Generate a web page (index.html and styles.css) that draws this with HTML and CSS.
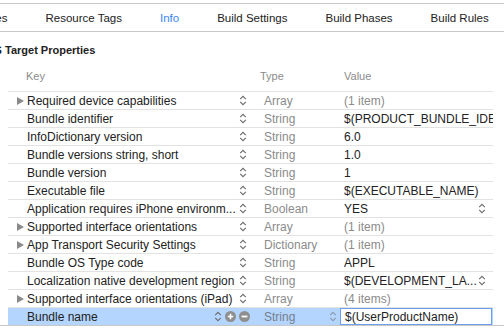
FILE: index.html
```html
<!DOCTYPE html>
<html lang="en">
<head>
  <meta charset="UTF-8">
  <title>Info</title>
  <link rel="stylesheet" href="styles.css">
</head>
<body>
  <svg class="defs" width="0" height="0">
    <symbol id="chev" viewBox="0 0 8 11">
      <path d="M1.2 4.2 L4 1.4 L6.8 4.2 M1.2 6.8 L4 9.6 L6.8 6.8" fill="none" stroke="#6b6b6b" stroke-width="1.1"/>
    </symbol>
    <symbol id="plus" viewBox="0 0 11 11">
      <circle cx="5.5" cy="5.5" r="5.5" fill="#8f8f8f"/>
      <path d="M2.8 5.5 H8.2 M5.5 2.8 V8.2" stroke="#fff" stroke-width="1.6"/>
    </symbol>
    <symbol id="minus" viewBox="0 0 11 11">
      <circle cx="5.5" cy="5.5" r="5.5" fill="#8f8f8f"/>
      <path d="M2.6 5.5 H8.4" stroke="#fff" stroke-width="1.8"/>
    </symbol>
  </svg>

  <div class="tabs">
    <span class="tab first">Capabilities</span>
    <span class="tab">Resource Tags</span>
    <span class="tab active">Info</span>
    <span class="tab">Build Settings</span>
    <span class="tab">Build Phases</span>
    <span class="tab">Build Rules</span>
  </div>

  <div class="section-title">iOS Target Properties</div>

  <div class="plist">
    <div class="head">
      <span class="h-key">Key</span>
      <span class="h-type">Type</span>
      <span class="h-val">Value</span>
    </div>

    <div class="row">
      <span class="tri"><i class="arrow"></i></span>
      <span class="key">Required device capabilities</span>
      <span class="ctl"><svg class="chev"><use href="#chev"/></svg></span>
      <span class="type">Array</span>
      <span class="val muted">(1 item)</span>
    </div>
    <div class="row">
      <span class="tri"></span>
      <span class="key">Bundle identifier</span>
      <span class="ctl"><svg class="chev"><use href="#chev"/></svg></span>
      <span class="type">String</span>
      <span class="val">$(PRODUCT_BUNDLE_IDENTIFIER)</span>
    </div>
    <div class="row">
      <span class="tri"></span>
      <span class="key">InfoDictionary version</span>
      <span class="ctl"><svg class="chev"><use href="#chev"/></svg></span>
      <span class="type">String</span>
      <span class="val">6.0</span>
    </div>
    <div class="row">
      <span class="tri"></span>
      <span class="key">Bundle versions string, short</span>
      <span class="ctl"><svg class="chev"><use href="#chev"/></svg></span>
      <span class="type">String</span>
      <span class="val">1.0</span>
    </div>
    <div class="row">
      <span class="tri"></span>
      <span class="key">Bundle version</span>
      <span class="ctl"><svg class="chev"><use href="#chev"/></svg></span>
      <span class="type">String</span>
      <span class="val">1</span>
    </div>
    <div class="row">
      <span class="tri"></span>
      <span class="key">Executable file</span>
      <span class="ctl"><svg class="chev"><use href="#chev"/></svg></span>
      <span class="type">String</span>
      <span class="val">$(EXECUTABLE_NAME)</span>
    </div>
    <div class="row">
      <span class="tri"></span>
      <span class="key">Application requires iPhone environm...</span>
      <span class="ctl"><svg class="chev"><use href="#chev"/></svg></span>
      <span class="type">Boolean</span>
      <span class="val"><span class="txt">YES</span><svg class="chev end"><use href="#chev"/></svg></span>
    </div>
    <div class="row">
      <span class="tri"><i class="arrow"></i></span>
      <span class="key">Supported interface orientations</span>
      <span class="ctl"><svg class="chev"><use href="#chev"/></svg></span>
      <span class="type">Array</span>
      <span class="val muted">(1 item)</span>
    </div>
    <div class="row">
      <span class="tri"><i class="arrow"></i></span>
      <span class="key">App Transport Security Settings</span>
      <span class="ctl"><svg class="chev"><use href="#chev"/></svg></span>
      <span class="type">Dictionary</span>
      <span class="val muted">(1 item)</span>
    </div>
    <div class="row">
      <span class="tri"></span>
      <span class="key">Bundle OS Type code</span>
      <span class="ctl"><svg class="chev"><use href="#chev"/></svg></span>
      <span class="type">String</span>
      <span class="val">APPL</span>
    </div>
    <div class="row">
      <span class="tri"></span>
      <span class="key">Localization native development region</span>
      <span class="ctl"><svg class="chev"><use href="#chev"/></svg></span>
      <span class="type">String</span>
      <span class="val"><span class="txt">$(DEVELOPMENT_LA...</span><svg class="chev end"><use href="#chev"/></svg></span>
    </div>
    <div class="row">
      <span class="tri"><i class="arrow"></i></span>
      <span class="key">Supported interface orientations (iPad)</span>
      <span class="ctl"><svg class="chev"><use href="#chev"/></svg></span>
      <span class="type">Array</span>
      <span class="val muted">(4 items)</span>
    </div>
    <div class="row selected">
      <span class="tri"></span>
      <span class="key">Bundle name</span>
      <span class="ctl">
        <svg class="chev"><use href="#chev"/></svg>
        <svg class="btn"><use href="#plus"/></svg>
        <svg class="btn"><use href="#minus"/></svg>
      </span>
      <span class="type"><span class="txt">String</span><svg class="chev end faint"><use href="#chev"/></svg></span>
      <span class="val"><span class="field">$(UserProductName)</span></span>
    </div>
  </div>

  <div class="bottom-line"></div>
</body>
</html>
```

FILE: styles.css
```css
:root {
  --text: #222222;
  --muted: #8b8b8b;
  --line: #e2e2e2;
  --bar-line: #c8c8c8;
  --accent: #3b87f5;
  --select: #b4d5fe;
}

body {
  margin: 0;
  font-family: 'Liberation Sans', Arial, sans-serif;
  color: var(--text);
  background: #ffffff;
  overflow: hidden;
}

.defs {
  position: absolute;
}

.tabs {
  margin-top: 3px;
  height: 27px;
  border-top: 1px solid var(--bar-line);
  border-bottom: 1px solid var(--bar-line);
  display: flex;
  align-items: center;
  gap: 38px;
  font-size: 11.5px;
  white-space: nowrap;
}

.tab.first {
  margin-left: -52px;
}

.tab.active {
  color: var(--accent);
}

.section-title {
  margin: 11px 0 0 -17px;
  font-size: 11px;
  font-weight: bold;
  line-height: 14px;
  white-space: nowrap;
}

.plist {
  margin: 12px 0 0 8px;
  width: 485px;
}

.head {
  display: flex;
  font-size: 11px;
  line-height: 14px;
  color: var(--muted);
  margin-bottom: 8px;
}

.h-key {
  width: 234px;
  padding-left: 18px;
}

.h-type {
  width: 80px;
}

.h-val {
  padding-left: 4px;
}

.row {
  display: flex;
  align-items: center;
  height: 17px;
  border-top: 1px solid var(--line);
  font-size: 12px;
  white-space: nowrap;
}

.tri {
  width: 19px;
  flex: none;
  display: flex;
  align-items: center;
  padding-left: 9px;
  box-sizing: border-box;
}

.arrow {
  width: 0;
  height: 0;
  border-top: 4px solid transparent;
  border-bottom: 4px solid transparent;
  border-left: 7px solid #8a8a8a;
}

.key {
  width: 209px;
  flex: none;
  overflow: hidden;
}

.ctl {
  width: 24px;
  flex: none;
  display: flex;
  align-items: center;
  padding-left: 3px;
  box-sizing: border-box;
}

.chev {
  width: 8px;
  height: 11px;
  flex: none;
}

.chev.faint {
  opacity: 0.55;
}

.btn {
  width: 11px;
  height: 11px;
  flex: none;
}

.type {
  width: 80px;
  flex: none;
  color: var(--muted);
  padding-left: 4px;
  box-sizing: border-box;
  display: flex;
  align-items: center;
}

.val {
  width: 153px;
  flex: none;
  padding-left: 4px;
  box-sizing: border-box;
  overflow: hidden;
  display: flex;
  align-items: center;
  height: 100%;
}

.val.muted {
  color: var(--muted);
}

.chev.end {
  margin-left: auto;
  margin-right: 7px;
}

.type .chev.end {
  margin-right: 3px;
}

.row.selected {
  background: var(--select);
}

.row.selected .key {
  width: 185px;
}

.row.selected .ctl {
  width: 48px;
  padding-left: 2px;
  gap: 3px;
}

.row.selected .type {
  color: #74808c;
}

.row.selected .val {
  padding-left: 0;
}

.field {
  flex: 1;
  height: 100%;
  box-sizing: border-box;
  background: #ffffff;
  border: 1px solid #6a9ff0;
  padding-left: 4px;
  display: flex;
  align-items: center;
  margin-right: 1px;
}

.bottom-line {
  border-top: 1px solid var(--bar-line);
}
```
